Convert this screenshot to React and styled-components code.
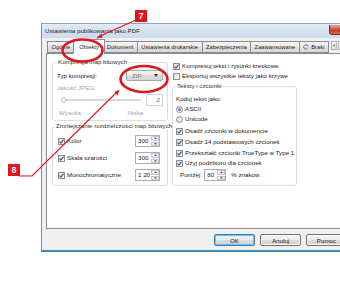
import React from "react";
import styled, { createGlobalStyle } from "styled-components";

const FONT = `"Liberation Sans", Arial, sans-serif`;
const RED = "#e1161c";
const FS = "6.2px";

const Global = createGlobalStyle`
  html, body { margin: 0; padding: 0; background: #fff; }
  body { width: 340px; height: 303px; overflow: hidden; font-family: ${FONT}; }
`;

const Stage = styled.div`
  position: relative;
  width: 340px;
  height: 303px;
  overflow: hidden;
  box-sizing: border-box;
  padding: 23px 0 0 41px;
  background: #fff;
`;

const Dialog = styled.div`
  width: 321px;
  height: 229px;
  box-sizing: border-box;
  display: flex;
  flex-direction: column;
  border-left: 1px solid #7d8ea3;
  border-top: 1px solid #91a4b9;
  border-bottom: 2px solid #3a8bb0;
  background: #f0f0f0;
`;

const TitleBar = styled.div`
  height: 14px;
  flex: none;
  display: flex;
  align-items: flex-start;
  background: linear-gradient(#e2ebf6, #d3e0ef 60%, #cbdaec);
`;

const Title = styled.span`
  font-size: 6.2px;
  line-height: 14px;
  color: #1d1d1d;
  padding-left: 3px;
  white-space: nowrap;
`;

const CloseBtn = styled.div`
  margin: 1px 5px 0 auto;
  width: 28px;
  height: 10px;
  box-sizing: border-box;
  border: 1px solid #8d2a1e;
  border-top: none;
  border-radius: 0 0 3px 3px;
  background: linear-gradient(#eaa596, #d5614a 45%, #c13a25 55%, #d66a4d);
  display: flex;
  align-items: center;
  justify-content: center;
`;

const Client = styled.div`
  flex: 1;
  display: flex;
  flex-direction: column;
  padding: 3px 5px 0 4px;
  min-height: 0;
`;

const TabRow = styled.div`
  height: 12px;
  flex: none;
  display: flex;
  align-items: flex-end;
  padding-left: 1px;
`;

const Tab = styled.div`
  position: relative;
  z-index: ${(p) => (p.$active ? 2 : 0)};
  height: ${(p) => (p.$active ? 15 : 12)}px;
  box-sizing: border-box;
  border: 1px solid #898c95;
  border-bottom: ${(p) => (p.$active ? "none" : "1px solid #898c95")};
  margin: ${(p) => (p.$active ? "0 -2px -1px -2px" : "0 0 0 -1px")};
  padding: ${(p) => (p.$active ? "0 5.5px" : "0 3.5px")};
  background: ${(p) =>
    p.$active ? "#fff" : "linear-gradient(#f4f4f4, #ebebeb 50%, #dfdfdf 50%, #d9d9d9)"};
  display: flex;
  align-items: center;
  gap: 2px;
  font-size: 5.8px;
  color: #1e1e1e;
  white-space: nowrap;
  &:first-child { margin-left: 0; }
`;

const TabScroll = styled.div`
  align-self: flex-start;
  display: flex;
  gap: 1px;
  margin-left: 2px;
`;

const ScrollBtn = styled.div`
  width: 6px;
  height: 9px;
  box-sizing: border-box;
  border: 1px solid #b5b5b5;
  background: linear-gradient(#f7f7f7, #e2e2e2);
  display: flex;
  align-items: center;
  justify-content: center;
`;

const Panel = styled.div`
  flex: 1;
  position: relative;
  z-index: 1;
  min-height: 0;
  box-sizing: border-box;
  border: 1px solid #898c95;
  background: #fff;
  display: grid;
  grid-template-columns: 116px 125px;
  column-gap: 4px;
  align-items: start;
  align-content: start;
  padding: 4px 0 0 5px;
`;

const Column = styled.div`
  display: flex;
  flex-direction: column;
  padding-top: ${(p) => p.$pt || 0}px;
`;

const GroupBox = styled.fieldset`
  margin: ${(p) => p.$mt || 0}px 0 0 0;
  min-width: 0;
  border: 1px solid #d5dfe5;
  border-radius: 3px;
  padding: ${(p) => `${p.$pt}px ${p.$pr}px ${p.$pb}px ${p.$pl}px`};
  display: flex;
  flex-direction: column;
`;

const Legend = styled.legend`
  padding: 0 1px;
  margin-left: ${(p) => p.$offset || 0}px;
  font-size: ${FS};
  line-height: 8px;
  color: #2d2d2d;
  white-space: nowrap;
`;

const Text = styled.span`
  font-size: ${FS};
  line-height: 8px;
  color: ${(p) => (p.$disabled ? "#a3a3a3" : "#222")};
  white-space: nowrap;
  margin-left: ${(p) => p.$ml || 0}px;
`;

const Row = styled.div`
  display: flex;
  align-items: center;
  height: ${(p) => p.$h || 10}px;
  margin-top: ${(p) => p.$mt || 0}px;
  padding-left: ${(p) => p.$pl || 0}px;
  flex: none;
`;

const ScaleLabels = styled.div`
  display: flex;
  justify-content: space-between;
  width: 84px;
  padding-left: 2px;
  margin-top: 3px;
  height: 8px;
`;

const Combo = styled.div`
  margin-left: auto;
  width: 37px;
  height: 11px;
  box-sizing: border-box;
  border: 1px solid #a7a7a7;
  border-radius: 2px;
  background: linear-gradient(#f5f5f5, #ebebeb 50%, #dddddd 50%, #d5d5d5);
  display: flex;
  align-items: center;
  justify-content: space-between;
  padding: 0 4px 0 5px;
  font-size: ${FS};
  color: #7b7b7b;
`;

const SliderBox = styled.div`
  position: relative;
  width: 78px;
  height: 8px;
  margin-left: 4px;
  display: flex;
  align-items: center;
  padding-left: 2px;
`;

const Track = styled.div`
  flex: 1;
  height: 2px;
  box-sizing: border-box;
  border: 1px solid #d9d9d9;
  background: #f0f0f0;
`;

const Thumb = styled.div`
  position: absolute;
  left: 0;
  top: 1px;
  width: 5px;
  height: 6px;
  box-sizing: border-box;
  border: 1px solid #c6c6c6;
  border-radius: 2px 2px 3px 3px;
  background: #f4f4f4;
`;

const SpinWrap = styled.div`
  margin-left: ${(p) => (p.$auto ? "auto" : `${p.$ml || 0}px`)};
  width: ${(p) => p.$w}px;
  height: 12px;
  box-sizing: border-box;
  border: 1px solid ${(p) => (p.$disabled ? "#cfd1d6" : "#abadb3")};
  background: #fff;
  display: flex;
  flex: none;
`;

const SpinValue = styled.span`
  flex: 1;
  min-width: 0;
  overflow: hidden;
  white-space: nowrap;
  font-size: ${FS};
  line-height: 10px;
  color: ${(p) => (p.$disabled ? "#6a6a6a" : "#222")};
  padding: 0 2px;
  text-align: ${(p) => (p.$right ? "right" : "left")};
`;

const SpinButtons = styled.div`
  width: 8px;
  flex: none;
  display: flex;
  flex-direction: column;
  gap: 1px;
  padding: 0 0 0 1px;
`;

const SpinBtn = styled.span`
  flex: 1;
  box-sizing: border-box;
  border: 1px solid #c7c9cf;
  background: linear-gradient(#fafafa, #e6e6e6);
  display: flex;
  align-items: center;
  justify-content: center;
`;

const Check = styled.span`
  width: 7px;
  height: 7px;
  flex: none;
  box-sizing: border-box;
  border: 1px solid #8e8f8f;
  background: linear-gradient(135deg, #dcdcdc, #fafafa);
  display: inline-flex;
  align-items: center;
  justify-content: center;
`;

const Radio = styled.span`
  width: 7px;
  height: 7px;
  flex: none;
  box-sizing: border-box;
  border: 1px solid #8e8f8f;
  border-radius: 50%;
  background: linear-gradient(135deg, #dcdcdc, #fafafa);
  display: inline-flex;
  align-items: center;
  justify-content: center;
  &::after {
    content: "";
    display: ${(p) => (p.$checked ? "block" : "none")};
    width: 3px;
    height: 3px;
    border-radius: 50%;
    background: radial-gradient(circle at 35% 35%, #7fb6f0, #1650a8);
  }
`;

const Footer = styled.div`
  height: 21px;
  flex: none;
  display: flex;
  justify-content: flex-end;
  align-items: flex-start;
  gap: 5px;
  padding: 5px 10px 0 0;
  box-sizing: border-box;
`;

const Button = styled.div`
  width: 41px;
  height: 12px;
  box-sizing: border-box;
  border: 1px solid ${(p) => (p.$focus ? "#3c7fb1" : "#707070")};
  border-radius: 2px;
  box-shadow: ${(p) => (p.$focus ? "inset 0 0 0 1px #5fc3ee" : "inset 0 0 0 1px #fcfcfc")};
  background: linear-gradient(#f2f2f2, #ebebeb 50%, #dddddd 50%, #cfcfcf);
  display: flex;
  align-items: center;
  justify-content: center;
  font-size: ${FS};
  color: #1e1e1e;
`;

const Overlay = styled.svg`
  position: absolute;
  left: 0;
  top: 0;
  width: 340px;
  height: 303px;
  z-index: 10;
  pointer-events: none;
`;

const Marker = styled.div`
  position: absolute;
  z-index: 11;
  left: ${(p) => p.$x}px;
  top: ${(p) => p.$y}px;
  width: 12px;
  height: 12px;
  background: ${RED};
  color: #fff;
  font-family: ${FONT};
  font-weight: bold;
  font-size: 9px;
  line-height: 12px;
  text-align: center;
`;

const CheckBox = ({ checked }) => (
  <Check>
    {checked && (
      <svg width="5" height="5" viewBox="0 0 5 5">
        <path d="M0.5 2.6 L1.9 4.1 L4.6 0.6" stroke="#3f5592" strokeWidth="1.1" fill="none" />
      </svg>
    )}
  </Check>
);

const Spinner = ({ value, w, auto, ml, right, disabled, noButtons }) => (
  <SpinWrap $w={w} $auto={auto} $ml={ml} $disabled={disabled}>
    <SpinValue $right={right} $disabled={disabled}>{value}</SpinValue>
    {!noButtons && (
      <SpinButtons>
        <SpinBtn>
          <svg width="3" height="2" viewBox="0 0 3 2"><path d="M0 2 L1.5 0 L3 2Z" fill="#6b6b6b" /></svg>
        </SpinBtn>
        <SpinBtn>
          <svg width="3" height="2" viewBox="0 0 3 2"><path d="M0 0 L1.5 2 L3 0Z" fill="#6b6b6b" /></svg>
        </SpinBtn>
      </SpinButtons>
    )}
  </SpinWrap>
);

const CheckRow = ({ checked, label, mt, pl }) => (
  <Row $h={10} $mt={mt} $pl={pl}>
    <CheckBox checked={checked} />
    <Text $ml={2}>{label}</Text>
  </Row>
);

const ResRow = ({ label, value, mt }) => (
  <Row $h={12} $mt={mt}>
    <CheckBox checked />
    <Text $ml={2}>{label}</Text>
    <Spinner value={value} w={25} auto />
  </Row>
);

export default function App() {
  return (
    <>
      <Global />
      <Stage>
        <Dialog>
          <TitleBar>
            <Title>Ustawienia publikowania jako PDF</Title>
            <CloseBtn>
              <svg width="8" height="6" viewBox="0 0 8 6">
                <path d="M1 0.5 L7 5.5 M7 0.5 L1 5.5" stroke="#5a1a10" strokeWidth="2.2" />
                <path d="M1 0.5 L7 5.5 M7 0.5 L1 5.5" stroke="#fff" strokeWidth="1.2" />
              </svg>
            </CloseBtn>
          </TitleBar>
          <Client>
            <TabRow>
              <Tab>Ogólne</Tab>
              <Tab $active>Obiekty</Tab>
              <Tab>Dokument</Tab>
              <Tab>Ustawienia drukarskie</Tab>
              <Tab>Zabezpieczenia</Tab>
              <Tab>Zaawansowane</Tab>
              <Tab>
                <svg width="6" height="6" viewBox="0 0 6 6">
                  <path d="M4.9 2.2 A2.2 2.2 0 1 0 4.6 4.3" stroke="#4f7a3c" strokeWidth="0.9" fill="none" />
                  <path d="M3.8 1.2 L5.4 1.4 L5.1 3Z" fill="#4f7a3c" />
                </svg>
                Braki
              </Tab>
              <TabScroll>
                <ScrollBtn>
                  <svg width="2" height="3" viewBox="0 0 2 3"><path d="M2 0 L0 1.5 L2 3Z" fill="#777" /></svg>
                </ScrollBtn>
                <ScrollBtn>
                  <svg width="2" height="3" viewBox="0 0 2 3"><path d="M0 0 L2 1.5 L0 3Z" fill="#777" /></svg>
                </ScrollBtn>
              </TabScroll>
            </TabRow>
            <Panel>
              <Column>
                <GroupBox $pt={4} $pr={4} $pb={3} $pl={4}>
                  <Legend>Kompresja map bitowych</Legend>
                  <Row $h={11}>
                    <Text>Typ kompresji:</Text>
                    <Combo>
                      ZIP
                      <svg width="4" height="3" viewBox="0 0 4 3"><path d="M0 0 L4 0 L2 3Z" fill="#333" /></svg>
                    </Combo>
                  </Row>
                  <Row $h={8} $mt={3}>
                    <Text $disabled>Jakość JPEG:</Text>
                  </Row>
                  <Row $h={12} $mt={2}>
                    <SliderBox>
                      <Track />
                      <Thumb />
                    </SliderBox>
                    <Spinner value="2" w={17} auto right disabled noButtons />
                  </Row>
                  <ScaleLabels>
                    <Text $disabled>Wysoka</Text>
                    <Text $disabled>Niska</Text>
                  </ScaleLabels>
                </GroupBox>
                <GroupBox $mt={1} $pt={5} $pr={7} $pb={4} $pl={5}>
                  <Legend $offset={-3}>Zmniejszanie rozdzielczości map bitowych</Legend>
                  <ResRow label="Kolor" value="300" />
                  <ResRow label="Skala szarości" value="300" mt={5} />
                  <ResRow label="Monochromatyczne" value="1 20" mt={5} />
                </GroupBox>
              </Column>
              <Column $pt={3}>
                <CheckRow checked label="Kompresuj tekst i rysunki kreskowe" pl={1} />
                <CheckRow label="Eksportuj wszystkie teksty jako krzywe" pl={1} />
                <GroupBox $mt={1} $pt={4} $pr={3} $pb={4} $pl={3}>
                  <Legend>Teksty i czcionki</Legend>
                  <Row $h={10}>
                    <Text>Koduj tekst jako:</Text>
                  </Row>
                  <Row $h={10}>
                    <Radio $checked />
                    <Text $ml={2}>ASCII</Text>
                  </Row>
                  <Row $h={10}>
                    <Radio />
                    <Text $ml={2}>Unicode</Text>
                  </Row>
                  <CheckRow checked label="Osadź czcionki w dokumencie" mt={2} />
                  <CheckRow checked label="Osadź 14 podstawowych czcionek" mt={1} />
                  <CheckRow checked label="Przekształć czcionki TrueType w Type 1" mt={1} />
                  <CheckRow checked label="Użyj podzbioru dla czcionek" />
                  <Row $h={12} $mt={1} $pl={4}>
                    <Text>Poniżej</Text>
                    <Spinner value="80" w={22} ml={4} />
                    <Text $ml={5}>% znaków</Text>
                  </Row>
                </GroupBox>
              </Column>
            </Panel>
            <Footer>
              <Button $focus>OK</Button>
              <Button>Anuluj</Button>
              <Button>Pomoc</Button>
            </Footer>
          </Client>
        </Dialog>

        <Overlay viewBox="0 0 340 303">
          <ellipse cx="82.5" cy="50.5" rx="20" ry="11" fill="none" stroke={RED} strokeWidth="2.6" />
          <ellipse cx="144" cy="79" rx="23.5" ry="13" fill="none" stroke={RED} strokeWidth="2.6" />
          <line x1="136" y1="20" x2="98" y2="37" stroke={RED} strokeWidth="1.2" />
          <path d="M96 38.5 L101.5 33.6 L102.6 37.4Z" fill={RED} />
          <polyline points="19,176 32,176 117,92" fill="none" stroke={RED} strokeWidth="1.2" />
          <path d="M119.5 89.5 L117.6 95.4 L114.3 92.1Z" fill={RED} />
        </Overlay>
        <Marker $x={135} $y={10}>7</Marker>
        <Marker $x={8} $y={164}>8</Marker>
      </Stage>
    </>
  );
}
